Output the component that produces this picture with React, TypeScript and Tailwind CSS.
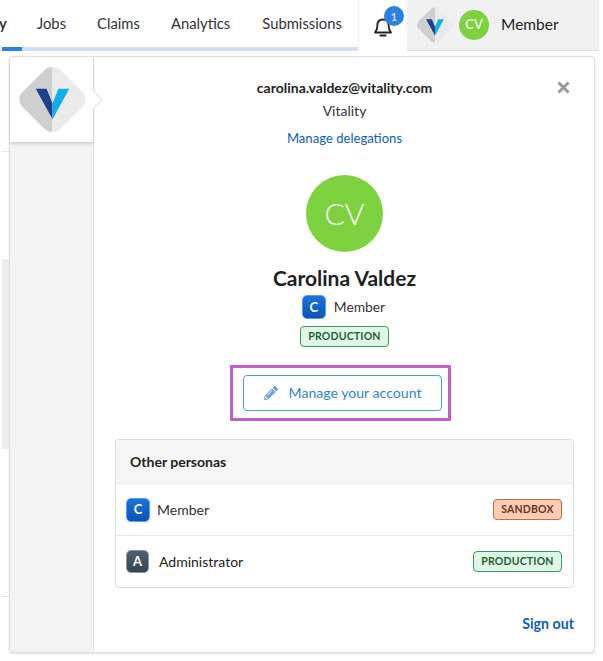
import React from "react";
import { FaPencilAlt } from "react-icons/fa";

function Logo({ size }: { size: number }) {
  return (
    <svg width={size} height={size} viewBox="0 0 68 68" className="block">
      <path d="M34 1 L34 67 C30 67 28 66 25 63 L4 42 C-1 37 -1 31 4 26 L25 5 C28 2 30 1 34 1 Z" fill="#cfcfcf" />
      <path d="M34 1 L34 67 C38 67 40 66 43 63 L64 42 C69 37 69 31 64 26 L43 5 C40 2 38 1 34 1 Z" fill="#ebebeb" />
      <path d="M17 23 L28 23 L34 38 L34 54 Z" fill="#1c3f8f" />
      <path d="M34 54 L34 38 L40 23 L51 23 Z" fill="#0fb0e3" />
    </svg>
  );
}

function Persona({ letter, dark }: { letter: string; dark?: boolean }) {
  return (
    <span
      className={
        dark
          ? "flex h-[23px] w-[23px] items-center justify-center rounded-[5px] border border-[#8a93a0] bg-gradient-to-b from-[#53606f] to-[#35435a] text-[13px] font-bold leading-none text-white"
          : "flex h-[24px] w-[24px] items-center justify-center rounded-[5px] border border-[#5a9ae8] bg-gradient-to-b from-[#1a74dc] to-[#0a54b6] text-[13px] font-bold leading-none text-white"
      }
    >
      {letter}
    </span>
  );
}

function Badge({ kind }: { kind: "prod" | "sand" }) {
  return (
    <span
      className={
        kind === "prod"
          ? "inline-flex h-[21px] w-[89px] items-center justify-center rounded-[4px] border border-[#3a9a63] bg-[#e0f7e6] text-[10.5px] font-bold tracking-[0.2px] text-[#1a6237]"
          : "inline-flex h-[21px] w-[69px] items-center justify-center rounded-[4px] border border-[#c9694a] bg-[#fbcdb5] text-[10.5px] font-bold tracking-[0.2px] text-[#6f3320]"
      }
    >
      {kind === "prod" ? "PRODUCTION" : "SANDBOX"}
    </span>
  );
}

export default function App() {
  return (
    <div className="relative h-[661px] w-[603px] overflow-hidden bg-white font-['Lato',sans-serif] text-[#222]">
      {/* Top navigation */}
      <div className="flex h-[52px] w-[599px]">
        <div className="flex w-[358px] flex-col pl-[2px]">
          <div className="flex h-[47px] items-center text-[14.8px] text-[#333]">
            <span className="ml-[-3px] w-[38px] font-bold leading-none">y</span>
            <span>Jobs</span>
            <span className="ml-[31px]">Claims</span>
            <span className="ml-[31px]">Analytics</span>
            <span className="ml-[32px]">Submissions</span>
          </div>
          <div className="flex h-[4px] bg-[#cfe0f6]">
            <div className="w-[20px] bg-[#2a80e4]" />
          </div>
        </div>
        <div className="relative flex h-[51px] w-[49px] items-center justify-center border-l border-[#eeeeee]">
          <svg width="20" height="22" viewBox="0 0 20 22" fill="none" stroke="#222" strokeWidth="1.8" className="mt-[3px]" strokeLinejoin="round">
            <path d="M2 16.5 C4 14.5 4.3 12.5 4.3 10 C4.3 6 6.5 3.5 10 3.5 C13.5 3.5 15.7 6 15.7 10 C15.7 12.5 16 14.5 18 16.5 Z" />
            <path d="M7.5 19.5 H12.5" strokeWidth="2.2" strokeLinecap="round" />
          </svg>
          <span className="absolute left-[25px] top-[6px] flex h-[20px] w-[20px] items-center justify-center rounded-full bg-[#2b80e0] text-[11px] leading-none text-white">
            1
          </span>
        </div>
        <div className="flex h-[51px] flex-1 items-center border-b border-[#dedede] bg-[#f1f1f1] pl-[10px]">
          <Logo size={36} />
          <span className="ml-[6px] flex h-[30px] w-[30px] items-center justify-center rounded-full bg-[#7ed13f] text-[13px] text-white">
            CV
          </span>
          <span className="ml-[12px] text-[15.5px] text-[#222]">Member</span>
        </div>
      </div>

      {/* Page content behind the panel */}
      <div className="absolute left-[2px] top-[151px] h-px w-[8px] bg-[#e4e4e4]" />
      <div className="absolute left-[2px] top-[260px] h-[189px] w-[8px] border-t border-[#e0e0e0] bg-[#eeeeee]" />
      <div className="absolute left-[2px] top-[596px] h-px w-[8px] bg-[#e0e0e0]" />

      {/* Account panel */}
      <div className="absolute left-[9px] top-[56px] flex h-[597px] w-[586px] rounded-[4px] border border-[#e0e0e0] bg-white shadow-[0_1px_2px_rgba(0,0,0,0.12)]">
        <div className="relative w-[84px] shrink-0 rounded-l-[4px] border-r border-[#dddddd] bg-[#f3f3f3]">
          <div className="flex h-[85px] items-center justify-center rounded-tl-[4px] bg-white pl-[1px] shadow-[0_2px_3px_rgba(0,0,0,0.14)]">
            <Logo size={67} />
          </div>
          <div className="absolute left-[77px] top-[36px] h-[13px] w-[13px] rotate-45 border-r border-t border-[#e2e2e2] bg-white" />
        </div>

        <div className="relative flex flex-1 flex-col items-center px-[21px]">
          <svg width="13" height="13" viewBox="0 0 13 13" className="absolute right-[25px] top-[24px]" stroke="#999" strokeWidth="3">
            <path d="M1.5 1.5 L11.5 11.5 M11.5 1.5 L1.5 11.5" />
          </svg>

          <div className="mt-[21px] text-[14px] font-bold leading-[20px] text-[#222]">carolina.valdez@vitality.com</div>
          <div className="mt-[3px] text-[14px] leading-[20px] text-[#333]">Vitality</div>
          <div className="mt-[7px] text-[13.1px] leading-[20px] text-[#0f5cc0]">Manage delegations</div>

          <div className="mt-[27px] flex h-[77px] w-[77px] items-center justify-center rounded-full bg-[#7ed13f] text-[30px] font-light text-white">
            CV
          </div>

          <div className="mt-[12px] text-[21px] font-bold leading-[28px] text-[#1f1f1f]">Carolina Valdez</div>
          <div className="mt-[3px] flex h-[24px] items-center gap-[8px] pr-[2px] text-[13.8px] text-[#333]">
            <Persona letter="C" />
            <span>Member</span>
          </div>
          <div className="mt-[7px] flex">
            <Badge kind="prod" />
          </div>

          <div className="mr-[8px] mt-[18px] rounded-[1px] border-[3px] border-[#c060c4] pb-[7px] pl-[10px] pr-[6px] pt-[7px]">
            <div className="flex h-[36px] w-[199px] items-center justify-center gap-[11px] rounded-[4px] border border-[#4d97e8] bg-white text-[14.1px] text-[#2f7fdc]">
              <FaPencilAlt size={14} color="#6a9fe0" />
              <span>Manage your account</span>
            </div>
          </div>

          <div className="mt-[18px] w-[459px] overflow-hidden rounded-[4px] border border-[#dcdcdc]">
            <div className="flex h-[44px] items-center border-b border-[#ececec] bg-[#f6f6f6] px-[14px] text-[14px] font-bold text-[#222]">
              Other personas
            </div>
            <div className="flex h-[52px] items-center justify-between border-b border-[#e6e6e6] pl-[10px] pr-[11px]">
              <div className="flex items-center gap-[7px] text-[14px] text-[#333]">
                <Persona letter="C" />
                <span>Member</span>
              </div>
              <Badge kind="sand" />
            </div>
            <div className="flex h-[51px] items-center justify-between pl-[10px] pr-[11px]">
              <div className="flex items-center gap-[10px] text-[14px] text-[#222]">
                <Persona letter="A" dark />
                <span>Administrator</span>
              </div>
              <Badge kind="prod" />
            </div>
          </div>

          <div className="mt-[26px] self-end text-[14.2px] font-bold leading-[20px] text-[#0f5cc0]">Sign out</div>
        </div>
      </div>
    </div>
  );
}
